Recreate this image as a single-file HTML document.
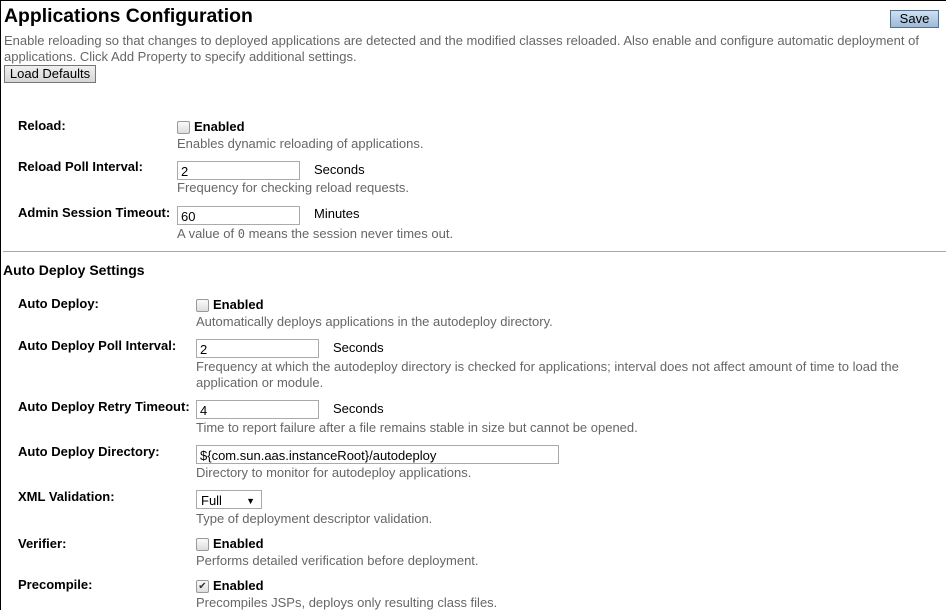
<!DOCTYPE html>
<html><head><meta charset="utf-8"><style>
*{margin:0;padding:0;box-sizing:border-box}
body{width:946px;height:610px;overflow:hidden;background:#fff;font-family:"Liberation Sans",Arial,sans-serif;font-size:13px;color:#000;position:relative}
.bt{position:absolute;left:0;top:0;width:946px;height:1px;background:#000}
.bl{position:absolute;left:0;top:0;width:1px;height:610px;background:#000}
.a{position:absolute;line-height:16px;white-space:nowrap}
.l{font-weight:bold}
.h{color:#666}
.in{position:absolute;border:1px solid #aaa;background:#fff;height:19px;padding:2px 3px 0;font-size:13px;line-height:16px}
.cb{position:absolute;width:13px;height:13px;border:1px solid #999;border-radius:2px;background:linear-gradient(#fafafa,#ddd)}
.btn{position:absolute;border:1px solid #777;background:linear-gradient(#f0f0f0,#d6d6d6);font-size:13px;line-height:16px;text-align:center}
</style></head><body>
<div class="bt"></div><div class="bl"></div>
<div class="a" style="left:4px;top:5px;font-size:19.4px;font-weight:bold;line-height:23px">Applications Configuration</div>
<div class="btn" style="left:890px;top:10px;width:49px;height:18px;background:linear-gradient(#cfe0f2,#9dbad8);border-color:#56708c">Save</div>
<div class="a h" style="left:4px;top:33px">Enable reloading so that changes to deployed applications are detected and the modified classes reloaded. Also enable and configure automatic deployment of</div>
<div class="a h" style="left:4px;top:49px">applications. Click Add Property to specify additional settings.</div>
<div class="btn" style="left:4px;top:65px;width:92px;height:18px">Load Defaults</div>

<div class="a l" style="left:18px;top:118px">Reload:</div>
<div class="cb" style="left:177px;top:121px"></div>
<div class="a l" style="left:194px;top:119px">Enabled</div>
<div class="a h" style="left:177px;top:136px">Enables dynamic reloading of applications.</div>

<div class="a l" style="left:18px;top:159px">Reload Poll Interval:</div>
<div class="in" style="left:177px;top:161px;width:123px">2</div>
<div class="a" style="left:314px;top:162px">Seconds</div>
<div class="a h" style="left:177px;top:180px">Frequency for checking reload requests.</div>

<div class="a l" style="left:18px;top:205px">Admin Session Timeout:</div>
<div class="in" style="left:177px;top:206px;width:123px">60</div>
<div class="a" style="left:314px;top:206px">Minutes</div>
<div class="a h" style="left:177px;top:226px">A value of <span style="font-family:'DejaVu Sans Mono',monospace;font-size:12px">0</span> means the session never times out.</div>

<div style="position:absolute;left:3px;top:251px;width:943px;height:1px;background:#a0a8b0"></div>
<div class="a l" style="left:3px;top:262px;font-size:14px">Auto Deploy Settings</div>

<div class="a l" style="left:18px;top:296px">Auto Deploy:</div>
<div class="cb" style="left:196px;top:299px"></div>
<div class="a l" style="left:213px;top:297px">Enabled</div>
<div class="a h" style="left:196px;top:314px">Automatically deploys applications in the autodeploy directory.</div>

<div class="a l" style="left:18px;top:338px">Auto Deploy Poll Interval:</div>
<div class="in" style="left:196px;top:339px;width:123px">2</div>
<div class="a" style="left:333px;top:340px">Seconds</div>
<div class="a h" style="left:196px;top:359px">Frequency at which the autodeploy directory is checked for applications; interval does not affect amount of time to load the</div>
<div class="a h" style="left:196px;top:375px">application or module.</div>

<div class="a l" style="left:18px;top:399px">Auto Deploy Retry Timeout:</div>
<div class="in" style="left:196px;top:400px;width:123px">4</div>
<div class="a" style="left:333px;top:401px">Seconds</div>
<div class="a h" style="left:196px;top:420px">Time to report failure after a file remains stable in size but cannot be opened.</div>

<div class="a l" style="left:18px;top:444px">Auto Deploy Directory:</div>
<div class="in" style="left:196px;top:445px;width:363px">${com.sun.aas.instanceRoot}/autodeploy</div>
<div class="a h" style="left:196px;top:465px">Directory to monitor for autodeploy applications.</div>

<div class="a l" style="left:18px;top:489px">XML Validation:</div>
<div class="in" style="left:196px;top:490px;width:66px;height:19px;padding-left:4px">Full<span style="position:absolute;right:6px;top:2px;font-size:9px">&#9660;</span></div>
<div class="a h" style="left:196px;top:511px">Type of deployment descriptor validation.</div>

<div class="a l" style="left:18px;top:536px">Verifier:</div>
<div class="cb" style="left:196px;top:538px"></div>
<div class="a l" style="left:213px;top:536px">Enabled</div>
<div class="a h" style="left:196px;top:553px">Performs detailed verification before deployment.</div>

<div class="a l" style="left:18px;top:577px">Precompile:</div>
<div class="cb" style="left:196px;top:580px;font-size:10px;line-height:11px;text-align:center;color:#333">&#10004;</div>
<div class="a l" style="left:213px;top:578px">Enabled</div>
<div class="a h" style="left:196px;top:595px">Precompiles JSPs, deploys only resulting class files.</div>
</body></html>
